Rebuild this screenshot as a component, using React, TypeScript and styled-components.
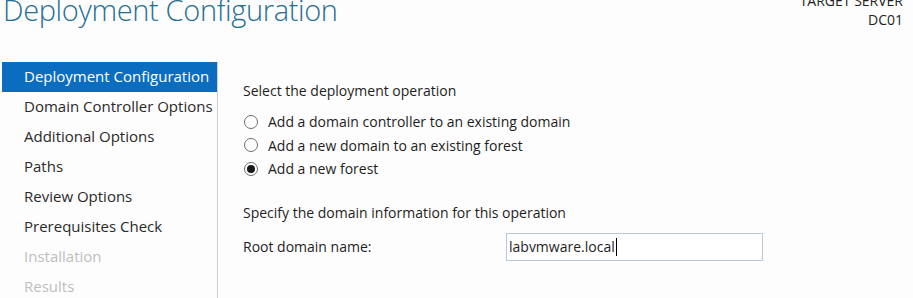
import React from "react";
import styled, { createGlobalStyle } from "styled-components";

const Global = createGlobalStyle`
  html, body { margin: 0; padding: 0; background: #fdfdfd; }
  body { font-family: "Open Sans", "Noto Sans", sans-serif; color: #1e1e1e; }
`;

const Page = styled.div`
  width: 913px;
  height: 298px;
  overflow: hidden;
  display: flex;
  flex-direction: column;
  background: #fdfdfd;
`;

const Header = styled.div`
  flex-shrink: 0;
  display: flex;
  justify-content: space-between;
  align-items: flex-start;
  height: 60px;
  margin-top: -10px;
`;

const Title = styled.h1`
  margin: 0 0 0 3px;
  font-weight: 300;
  font-size: 29px;
  line-height: 40px;
  color: #266f94;
  letter-spacing: -0.35px;
`;

const Target = styled.div`
  text-align: right;
  padding-right: 10px;
  padding-top: 1px;
  font-size: 14px;
  line-height: 19px;
  color: #1e1e1e;
`;

const Body = styled.div`
  flex-shrink: 0;
  display: flex;
  margin-top: 12px;
`;

const Nav = styled.nav`
  width: 215px;
  padding-left: 2px;
  border-right: 1px solid #cfcfcf;
  display: flex;
  flex-direction: column;
`;

const NavItem = styled.div<{ $state: "active" | "normal" | "disabled" }>`
  height: 30px;
  line-height: 28px;
  padding-left: 22px;
  font-size: 15px;
  white-space: nowrap;
  background: ${(p) => (p.$state === "active" ? "#0b6dc0" : "transparent")};
  color: ${(p) =>
    p.$state === "active" ? "#ffffff" : p.$state === "disabled" ? "#bdbdbd" : "#2a2a2a"};
`;

const Content = styled.div`
  flex: 1;
  padding: 19px 0 0 25px;
  display: flex;
  flex-direction: column;
`;

const Heading = styled.div`
  font-size: 14px;
  line-height: 20px;
  color: #1e1e1e;
`;

const RadioGroup = styled.div`
  display: flex;
  flex-direction: column;
  margin-top: 9px;
`;

const RadioRow = styled.label`
  display: flex;
  align-items: center;
  height: 23.5px;
  font-size: 14px;
  color: #1e1e1e;
`;

const Circle = styled.span<{ $checked: boolean }>`
  box-sizing: border-box;
  width: 14px;
  height: 14px;
  margin: 0 10px 0 1px;
  border-radius: 50%;
  border: 1px solid #6e6e6e;
  background: #ffffff;
  display: flex;
  align-items: center;
  justify-content: center;
  &::after {
    content: "";
    width: 8px;
    height: 8px;
    border-radius: 50%;
    background: ${(p) => (p.$checked ? "#1a1a1a" : "transparent")};
  }
`;

const Section = styled.div`
  margin-top: 22px;
`;

const FieldRow = styled.div`
  display: flex;
  align-items: center;
  margin-top: 10px;
`;

const FieldLabel = styled.div`
  width: 263px;
  font-size: 14px;
  color: #1e1e1e;
`;

const Input = styled.div`
  box-sizing: border-box;
  width: 257px;
  height: 28px;
  border: 1px solid #b9c9d6;
  background: #ffffff;
  padding-left: 2px;
  font-size: 14px;
  line-height: 26px;
  color: #1e1e1e;
  display: flex;
  align-items: center;
`;

const Caret = styled.span`
  display: inline-block;
  width: 1px;
  height: 18px;
  background: #000;
  margin-left: 1px;
`;

const navItems: { label: string; state: "active" | "normal" | "disabled" }[] = [
  { label: "Deployment Configuration", state: "active" },
  { label: "Domain Controller Options", state: "normal" },
  { label: "Additional Options", state: "normal" },
  { label: "Paths", state: "normal" },
  { label: "Review Options", state: "normal" },
  { label: "Prerequisites Check", state: "normal" },
  { label: "Installation", state: "disabled" },
  { label: "Results", state: "disabled" },
];

const radios = [
  { label: "Add a domain controller to an existing domain", checked: false },
  { label: "Add a new domain to an existing forest", checked: false },
  { label: "Add a new forest", checked: true },
];

export default function App() {
  return (
    <Page>
      <Global />
      <Header>
        <Title>Deployment Configuration</Title>
        <Target>
          TARGET SERVER
          <br />
          DC01
        </Target>
      </Header>
      <Body>
        <Nav>
          {navItems.map((n) => (
            <NavItem key={n.label} $state={n.state}>
              {n.label}
            </NavItem>
          ))}
        </Nav>
        <Content>
          <Heading>Select the deployment operation</Heading>
          <RadioGroup>
            {radios.map((r) => (
              <RadioRow key={r.label}>
                <Circle $checked={r.checked} />
                {r.label}
              </RadioRow>
            ))}
          </RadioGroup>
          <Section>
            <Heading>Specify the domain information for this operation</Heading>
            <FieldRow>
              <FieldLabel>Root domain name:</FieldLabel>
              <Input>
                labvmware.local
                <Caret />
              </Input>
            </FieldRow>
          </Section>
        </Content>
      </Body>
    </Page>
  );
}
